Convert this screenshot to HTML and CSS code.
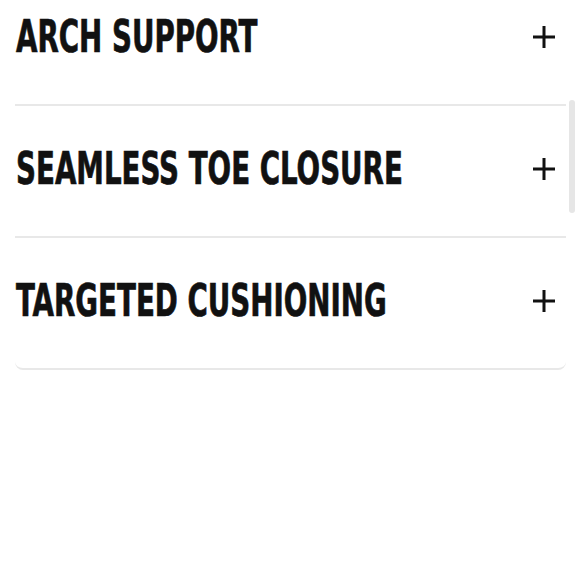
FILE: index.html
```html
<!DOCTYPE html>
<html lang="en">
<head>
<meta charset="utf-8">
<title>Features</title>
<link rel="stylesheet" href="styles.css">
</head>
<body>
<div class="page">
  <div class="accordion">
    <div class="item">
      <button class="header" type="button">
        <span class="title">ARCH SUPPORT</span>
        <svg class="plus" viewBox="0 0 22 22" width="22" height="22" aria-hidden="true"><path d="M11 0V22M0 11H22" stroke="#111" stroke-width="3" fill="none"/></svg>
      </button>
    </div>
    <div class="item">
      <button class="header" type="button">
        <span class="title">SEAMLESS TOE CLOSURE</span>
        <svg class="plus" viewBox="0 0 22 22" width="22" height="22" aria-hidden="true"><path d="M11 0V22M0 11H22" stroke="#111" stroke-width="3" fill="none"/></svg>
      </button>
    </div>
    <div class="item">
      <button class="header" type="button">
        <span class="title">TARGETED CUSHIONING</span>
        <svg class="plus" viewBox="0 0 22 22" width="22" height="22" aria-hidden="true"><path d="M11 0V22M0 11H22" stroke="#111" stroke-width="3" fill="none"/></svg>
      </button>
    </div>
  </div>
  <div class="scroll-thumb"></div>
</div>
</body>
</html>
```
FILE: styles.css
```css
html, body {
  margin: 0;
  padding: 0;
  background: #fff;
}
.page {
  position: relative;
  width: 580px;
  height: 580px;
  overflow: hidden;
}
.accordion {
  margin: -26px 14px 0 15px;
  border-radius: 0 0 8px 8px;
}
.item {
  border-bottom: 2px solid #e8e8e8;
}
.item:last-child {
  border-radius: 0 0 8px 8px;
}
.header {
  display: flex;
  align-items: center;
  width: 100%;
  height: 130px;
  padding: 0 11px 4px 1px;
  margin: 0;
  border: 0;
  background: transparent;
  color: #111;
  cursor: pointer;
  box-sizing: border-box;
  text-align: left;
}
.title {
  flex: 1;
  min-width: 0;
  display: block;
  font-family: "DejaVu Sans Condensed", "DejaVu Sans", sans-serif;
  font-weight: 700;
  font-size: 44px;
  line-height: 1;
  white-space: nowrap;
  -webkit-text-stroke: 0.7px #111;
  transform-origin: left center;
  transform: scaleX(0.70);
}
.plus {
  display: block;
  flex: none;
}
.scroll-thumb {
  position: absolute;
  left: 569px;
  top: 100px;
  width: 6px;
  height: 113px;
  border-radius: 3px;
  background: #e6e6e6;
}
```
